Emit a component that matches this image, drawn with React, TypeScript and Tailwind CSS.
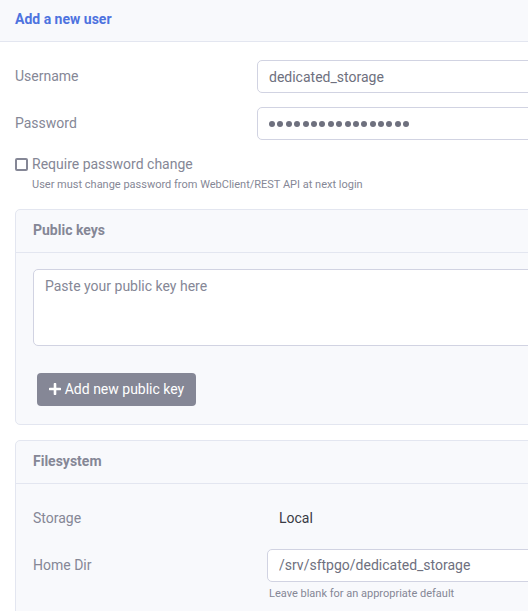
import React from "react";

const labelCls = "text-[14px] text-[#858796]";
const inputCls =
  "h-[33px] w-full rounded-[5px] border border-[#d1d3e2] bg-white px-[11px] text-[14px] text-[#6e707e] outline-none";

const PlusIcon = () => (
  <svg width="12" height="12" viewBox="0 0 12 12" className="mr-[4px]">
    <path d="M6 1v10M1 6h10" stroke="white" strokeWidth="2.6" strokeLinecap="round" />
  </svg>
);

const Card = ({ title, children }: { title: string; children: React.ReactNode }) => (
  <div className="mx-[15px] rounded-[5px] border border-[#e3e6f0] bg-[#f8f9fc]">
    <div className="flex h-[43px] items-center border-b border-[#e3e6f0] px-[17px] text-[14px] font-bold text-[#858796]">
      {title}
    </div>
    {children}
  </div>
);

const App = () => {
  const dots = Array.from({ length: 17 });
  return (
    <div className="h-[611px] w-[528px] overflow-hidden bg-white font-['Roboto',sans-serif]">
      <div className="w-[760px]">
        <div className="flex h-[42px] items-center border-b border-[#e3e6f0] bg-[#f8f9fc] px-[15px] pb-[3px] text-[14px] font-bold text-[#4e73df]">
          Add a new user
        </div>

        <div className="px-[15px] pt-[18px]">
          <div className="mb-[14px] flex items-center">
            <label className={`${labelCls} w-[242px] shrink-0`}>Username</label>
            <input className={inputCls} defaultValue="dedicated_storage" readOnly />
          </div>
          <div className="mb-[14px] flex items-center">
            <label className={`${labelCls} w-[242px] shrink-0`}>Password</label>
            <div className={`${inputCls} flex items-center gap-[2.4px]`}>
              {dots.map((_, i) => (
                <span key={i} className="h-[6px] w-[6px] rounded-full bg-[#6e707e]" />
              ))}
            </div>
          </div>
          <div className="mt-[4px] flex items-center">
            <span className="mr-[4px] h-[13px] w-[13px] rounded-[2px] border-2 border-[#858796] bg-white" />
            <span className={labelCls}>Require password change</span>
          </div>
          <div className="mt-[2px] pl-[17px] text-[11px] text-[#858796]">
            User must change password from WebClient/REST API at next login
          </div>
        </div>

        <div className="mt-[15px]">
          <Card title="Public keys">
            <div className="px-[17px] pb-[18px] pt-[16px]">
              <textarea
                className="block h-[77px] w-full resize-none rounded-[5px] border border-[#d1d3e2] bg-white px-[11px] py-[6px] text-[14px] text-[#6e707e] outline-none placeholder:text-[#858796]"
                placeholder="Paste your public key here"
                readOnly
              />
              <button className="ml-[4px] mt-[27px] flex h-[33px] w-[159px] items-center justify-center rounded-[4px] bg-[#858796] text-[14px] text-white">
                <PlusIcon />
                Add new public key
              </button>
            </div>
          </Card>
        </div>

        <div className="mt-[15px]">
          <Card title="Filesystem">
            <div className="px-[17px] pt-[24px]">
              <div className="flex h-[22px] items-center">
                <span className={`${labelCls} w-[246px] shrink-0`}>Storage</span>
                <span className="text-[14px] text-[#3a3b45]">Local</span>
              </div>
              <div className="mt-[19px] flex items-start">
                <span className={`${labelCls} flex h-[33px] w-[234px] shrink-0 items-center`}>Home Dir</span>
                <div className="flex-1">
                  <input
                    className={inputCls}
                    defaultValue="/srv/sftpgo/dedicated_storage"
                    readOnly
                  />
                  <div className="mt-[4px] pl-[2px] text-[11px] text-[#858796]">
                    Leave blank for an appropriate default
                  </div>
                </div>
              </div>
              <div className="h-[40px]" />
            </div>
          </Card>
        </div>
      </div>
    </div>
  );
};

export default App;
